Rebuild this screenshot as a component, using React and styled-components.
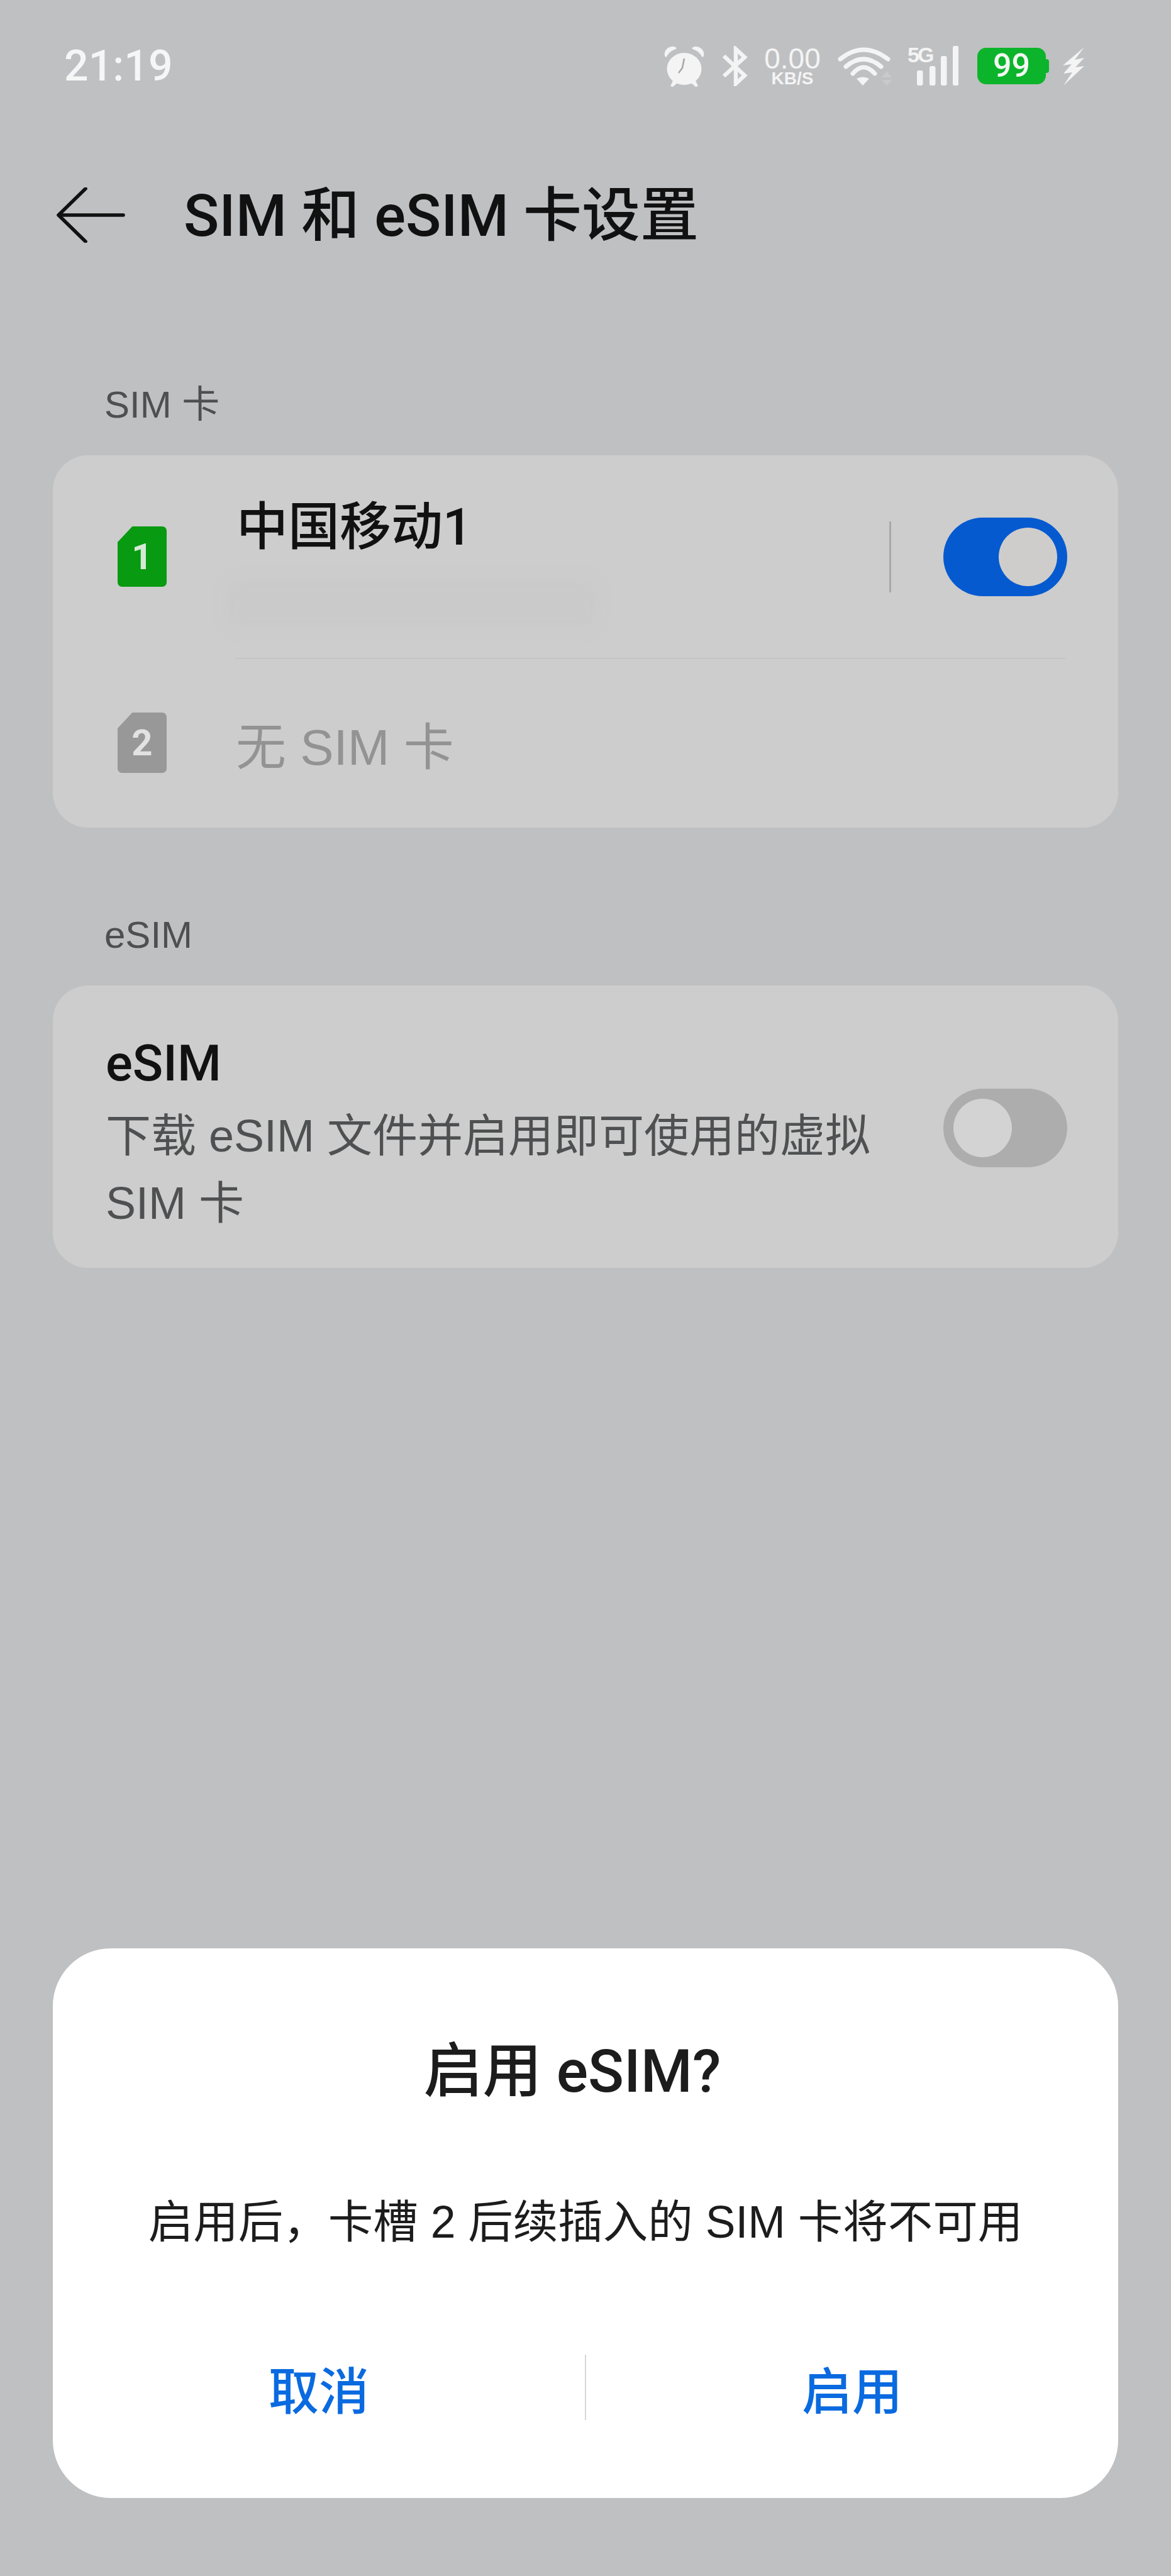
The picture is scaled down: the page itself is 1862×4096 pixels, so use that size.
import styled, { createGlobalStyle } from 'styled-components';

const GlobalStyle = createGlobalStyle`
  html, body {
    margin: 0;
    padding: 0;
    background: #bfc0c2;
  }
  * {
    box-sizing: border-box;
  }
`;

const FONT = '"Liberation Sans", "Noto Sans CJK SC", sans-serif';
const MEDIUM_FONT = 'Roboto, "Noto Sans CJK SC", sans-serif';

function AlarmIcon() {
  return (
    <svg width="66" height="65" viewBox="0 0 66 65" fill="#f4f4f4">
      <path d="M1 16 C-1 7 7 0 15 1 C19 2 20 3 19 5 C12 7 7 11 4 17 C3 18 2 18 1 16Z" />
      <path d="M63 16 C65 7 57 0 49 1 C45 2 44 3 45 5 C52 7 57 11 60 17 C61 18 62 18 63 16Z" />
      <ellipse cx="32" cy="36.5" rx="27.5" ry="25.5" />
      <path d="M14 55 L10 64 L14 65 L21 59Z M50 55 L54 64 L50 65 L43 59Z" />
      <path d="M32 20 L29 35 L23 43" fill="none" stroke="#a8a8a8" strokeWidth="2.6" />
    </svg>
  );
}

function BluetoothIcon() {
  return (
    <svg width="41" height="64" viewBox="0 0 41 64" fill="none" stroke="#f4f4f4" strokeWidth="6.4">
      <path d="M3 16 L36 47 L22 60 L22 5 L36 18 L3 48" />
    </svg>
  );
}

function WifiIcon() {
  return (
    <svg width="86" height="61" viewBox="0 0 86 61">
      <g fill="none" stroke="#f4f4f4" strokeWidth="7" strokeLinecap="round">
        <path d="M4 19 Q41 -11 80 19" />
        <path d="M13 31 Q41 7 69 31" />
        <path d="M24 42 Q41 22 59 42" />
      </g>
      <path d="M30 50 Q40 45 50 50 L40 61Z" fill="#f4f4f4" />
      <path d="M70 48 L78 38 L86 48Z M70 52 L86 52 L78 61Z" fill="#c9cacc" />
    </svg>
  );
}

function SignalIcon() {
  const bars = [
    { x: 15, top: 39 },
    { x: 35, top: 32 },
    { x: 53, top: 16 },
    { x: 72, top: 0 },
  ];
  return (
    <svg width="81" height="64" viewBox="0 0 81 64" fill="#f4f4f4">
      {bars.map((bar) => (
        <rect key={bar.x} x={bar.x} y={bar.top} width="9.5" height={63 - bar.top} rx="3" />
      ))}
    </svg>
  );
}

function BoltIcon() {
  return (
    <svg width="36" height="61" viewBox="0 0 36 61" fill="#f4f4f4">
      <path d="M35 0 L1 29 L15 27 L2 42 L16 40 L2 61 L35 30 L21 32 L35 17 L20 20Z" />
    </svg>
  );
}

function BackArrow() {
  return (
    <svg width="112" height="88" viewBox="0 0 112 88" fill="none" stroke="#111" strokeWidth="5.6" strokeLinecap="round" strokeLinejoin="round">
      <path d="M46 2 L3 44 L46 86" />
      <path d="M4 44 L106 44" />
    </svg>
  );
}

export default function App() {
  return (
    <Page>
      <GlobalStyle />
      <StatusBar>
        <Time>21:19</Time>
        <StatusIcons>
          <AlarmIcon />
          <BluetoothIcon />
          <Speed>
            <SpeedValue>0.00</SpeedValue>
            <SpeedUnit>KB/S</SpeedUnit>
          </Speed>
          <WifiIcon />
          <Signal>
            <SignalLabel>5G</SignalLabel>
            <SignalIcon />
          </Signal>
          <Battery>99</Battery>
          <BoltIcon />
        </StatusIcons>
      </StatusBar>

      <TitleBar>
        <BackArrow />
        <PageTitle>SIM 和 eSIM 卡设置</PageTitle>
      </TitleBar>

      <SectionLabel>SIM 卡</SectionLabel>
      <Card>
        <SimRow>
          <SimShape $color="#089a10" $digitColor="#d5ead5">1</SimShape>
          <SimBody>
            <SimName>中国移动1</SimName>
            <Smudge />
          </SimBody>
          <VerticalRule />
          <Toggle $on>
            <Knob $on />
          </Toggle>
        </SimRow>
        <RowDivider />
        <EmptySimRow>
          <SimShape $color="#989898" $digitColor="#e2e2e2">2</SimShape>
          <EmptyLabel>无 SIM 卡</EmptyLabel>
        </EmptySimRow>
      </Card>

      <SecondLabel>eSIM</SecondLabel>
      <EsimCard>
        <EsimText>
          <EsimTitle>eSIM</EsimTitle>
          <EsimDesc>下载 eSIM 文件并启用即可使用的虚拟 SIM 卡</EsimDesc>
        </EsimText>
        <Toggle>
          <Knob />
        </Toggle>
      </EsimCard>

      <Dialog>
        <DialogTitle>启用 eSIM?</DialogTitle>
        <DialogMessage>启用后，卡槽 2 后续插入的 SIM 卡将不可用</DialogMessage>
        <DialogActions>
          <DialogButton>取消</DialogButton>
          <ActionRule />
          <DialogButton>启用</DialogButton>
        </DialogActions>
      </Dialog>
    </Page>
  );
}

const Page = styled.div`
  width: 1862px;
  height: 4096px;
  display: flex;
  flex-direction: column;
  padding: 0 84px 124px;
  background: #bfc0c2;
  font-family: ${FONT};
  overflow: hidden;
`;

const StatusBar = styled.div`
  display: flex;
  align-items: center;
  justify-content: space-between;
  height: 70px;
  margin-top: 70px;
  padding-left: 18px;
`;

const Time = styled.span`
  font-family: ${MEDIUM_FONT};
  font-size: 68px;
  font-weight: 500;
  color: #f6f6f6;
`;

const StatusIcons = styled.div`
  display: flex;
  align-items: center;
  gap: 26px;
  margin-right: 53px;
`;

const Speed = styled.div`
  display: flex;
  flex-direction: column;
  align-items: center;
  width: 90px;
  margin-right: 1px;
  color: #f4f4f4;
`;

const SpeedValue = styled.span`
  font-size: 46px;
  line-height: 40px;
`;

const SpeedUnit = styled.span`
  font-size: 28px;
  line-height: 24px;
  font-weight: 700;
`;

const Signal = styled.div`
  position: relative;
  width: 81px;
  height: 64px;
  margin-left: -1px;
`;

const SignalLabel = styled.span`
  position: absolute;
  left: 0;
  top: -5px;
  font-size: 34px;
  font-weight: 700;
  letter-spacing: -3px;
  color: #f4f4f4;
`;

const Battery = styled.div`
  position: relative;
  width: 109px;
  height: 58px;
  margin-left: 4px;
  border-radius: 14px;
  background: #0cb42b;
  color: #f2f7f2;
  font-family: ${MEDIUM_FONT};
  font-size: 52px;
  font-weight: 500;
  line-height: 58px;
  text-align: center;

  &::after {
    content: '';
    position: absolute;
    right: -5px;
    top: 18px;
    width: 5px;
    height: 22px;
    border-radius: 0 4px 4px 0;
    background: #0cb42b;
  }
`;

const TitleBar = styled.div`
  display: flex;
  align-items: center;
  gap: 90px;
  height: 100px;
  margin-top: 152px;
  margin-left: 6px;
`;

const PageTitle = styled.h1`
  margin: -16px 0 0;
  font-family: ${MEDIUM_FONT};
  font-size: 93px;
  font-weight: 500;
  color: #111;
  white-space: nowrap;
`;

const SectionLabel = styled.div`
  height: 113px;
  margin-top: 219px;
  margin-left: 82px;
  font-size: 60px;
  line-height: 66px;
  color: #4e4f50;
`;

const SecondLabel = styled(SectionLabel)`
  margin-top: 138px;
`;

const Card = styled.div`
  border-radius: 56px;
  background: #cdcdcd;
`;

const SimRow = styled.div`
  display: flex;
  align-items: center;
  height: 322px;
  padding: 0 81px 0 103px;
`;

const SimShape = styled.div`
  display: flex;
  align-items: center;
  justify-content: center;
  flex: none;
  width: 78px;
  height: 96px;
  border-radius: 7px;
  clip-path: polygon(30% 0, 100% 0, 100% 100%, 0 100%, 0 26%);
  background: ${(p) => p.$color};
  color: ${(p) => p.$digitColor};
  font-family: ${MEDIUM_FONT};
  font-size: 58px;
  font-weight: 700;
`;

const SimBody = styled.div`
  flex: 1;
  align-self: flex-start;
  margin-left: 111px;
  padding-top: 64px;
`;

const SimName = styled.div`
  font-family: ${MEDIUM_FONT};
  font-size: 82px;
  font-weight: 500;
  line-height: 100px;
  color: #111;
`;

const Smudge = styled.div`
  width: 590px;
  height: 80px;
  margin: 32px 0 0 -16px;
  border-radius: 16px;
  background: #cacaca;
  filter: blur(10px);
`;

const VerticalRule = styled.div`
  flex: none;
  width: 3px;
  height: 113px;
  margin-right: 83px;
  background: #a9a9a9;
`;

const Toggle = styled.div`
  display: flex;
  align-items: center;
  justify-content: ${(p) => (p.$on ? 'flex-end' : 'flex-start')};
  flex: none;
  width: 197px;
  height: 125px;
  padding: 0 16px;
  border-radius: 63px;
  background: ${(p) => (p.$on ? '#055ad0' : '#adadad')};
`;

const Knob = styled.div`
  width: 93px;
  height: 93px;
  border-radius: 50%;
  background: ${(p) => (p.$on ? '#cfcdcb' : '#d3d3d3')};
`;

const RowDivider = styled.div`
  height: 2px;
  margin: 0 84px 0 290px;
  background: #c4c4c4;
`;

const EmptySimRow = styled.div`
  display: flex;
  align-items: center;
  height: 268px;
  padding: 0 0 2px 103px;
`;

const EmptyLabel = styled.span`
  margin-left: 110px;
  font-size: 80px;
  color: #939393;
`;

const EsimCard = styled(Card)`
  display: flex;
  align-items: center;
  justify-content: space-between;
  height: 449px;
  padding: 4px 81px 0 84px;
`;

const EsimText = styled.div`
  width: 1220px;
  padding-top: 22px;
`;

const EsimTitle = styled.div`
  font-family: ${MEDIUM_FONT};
  font-size: 80px;
  font-weight: 500;
  line-height: 96px;
  color: #111;
`;

const EsimDesc = styled.div`
  margin-top: 14px;
  font-size: 72px;
  line-height: 107px;
  color: #4f5051;
`;

const Dialog = styled.div`
  display: flex;
  flex-direction: column;
  align-items: center;
  height: 874px;
  margin-top: auto;
  border-radius: 92px;
  background: #fff;
`;

const DialogTitle = styled.div`
  margin-top: 146px;
  padding-right: 42px;
  font-family: ${MEDIUM_FONT};
  font-size: 94px;
  font-weight: 500;
  line-height: 100px;
  color: #1c1c1c;
`;

const DialogMessage = styled.div`
  margin-top: 144px;
  font-size: 71.5px;
  line-height: 90px;
  color: #1c1c1c;
  white-space: nowrap;
`;

const DialogActions = styled.div`
  display: grid;
  grid-template-columns: 1fr auto 1fr;
  align-items: center;
  width: 100%;
  margin-top: 160px;
`;

const DialogButton = styled.div`
  font-family: ${MEDIUM_FONT};
  font-size: 80px;
  font-weight: 500;
  text-align: center;
  color: #0a6ae0;
`;

const ActionRule = styled.div`
  width: 2px;
  height: 104px;
  background: #d8d8d8;
`;
